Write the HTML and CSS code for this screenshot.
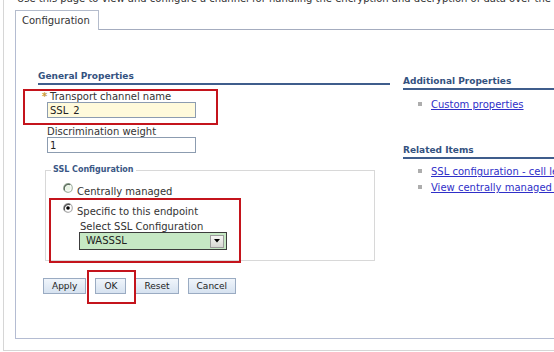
FILE: index.html
```html
<!DOCTYPE html>
<html lang="en">
<head>
<meta charset="utf-8">
<title>SSL inbound channel - Configuration</title>
<link rel="stylesheet" href="styles.css">
</head>
<body>
<div class="page">
  <p class="desc">Use this page to view and configure a channel for handling the encryption and decryption of data over the network.</p>
  <div class="tabs">
    <div class="tab">Configuration</div>
    <div class="tab-fill"></div>
  </div>
  <div class="panel">
    <div class="cols">
      <div class="main">
        <h2 class="sec">General Properties</h2>
        <div class="field">
          <label class="lbl"><span class="req">*</span>Transport channel name</label>
          <input class="txt txt-req" type="text" value="SSL_2">
        </div>
        <div class="field field-2">
          <label class="lbl">Discrimination weight</label>
          <input class="txt" type="text" value="1">
        </div>
        <fieldset class="group">
          <legend class="legend">SSL Configuration</legend>
          <div class="radio-row">
            <svg class="radio" width="10" height="10" viewBox="0 0 10 10"><circle cx="5" cy="5" r="4.3" fill="#fff" stroke="#a8b8a8" stroke-width="1.2"/><path d="M1.6 7.2 A4.3 4.3 0 0 1 7.2 1.6" fill="none" stroke="#5f6f5f" stroke-width="1.3"/><circle cx="5" cy="5" r="2.6" fill="#e8f4e4"/></svg>
            <span class="radio-txt">Centrally managed</span>
          </div>
          <div class="radio-row radio-row-2">
            <svg class="radio" width="10" height="10" viewBox="0 0 10 10"><circle cx="5" cy="5" r="4.3" fill="#fff" stroke="#b0b0b0" stroke-width="1.2"/><path d="M1.6 7.2 A4.3 4.3 0 0 1 7.2 1.6" fill="none" stroke="#555" stroke-width="1.3"/><circle cx="5" cy="5" r="1.8" fill="#000"/></svg>
            <span class="radio-txt">Specific to this endpoint</span>
          </div>
          <div class="sub">
            <div class="sub-lbl">Select SSL Configuration</div>
            <div class="select">
              <span class="select-val">WASSSL</span>
              <span class="select-btn"><svg width="6" height="4" viewBox="0 0 6 4"><path d="M0 0 H6 L3 3.5 Z" fill="#000"/></svg></span>
            </div>
          </div>
        </fieldset>
        <div class="buttons">
          <button class="btn" type="button">Apply</button>
          <button class="btn" type="button">OK</button>
          <button class="btn" type="button">Reset</button>
          <button class="btn" type="button">Cancel</button>
        </div>
      </div>
      <div class="side">
        <h2 class="sec">Additional Properties</h2>
        <ul class="links links-1">
          <li><span class="bullet"></span><a href="#">Custom properties</a></li>
        </ul>
        <h2 class="sec sec-related">Related Items</h2>
        <ul class="links links-2">
          <li><span class="bullet"></span><a href="#">SSL configuration - cell level</a></li>
          <li><span class="bullet"></span><a href="#">View centrally managed certificates</a></li>
        </ul>
      </div>
    </div>
  </div>
  <div class="mark mark-1"></div>
  <div class="mark mark-2"></div>
  <div class="mark mark-3"></div>
</div>
</body>
</html>
```

FILE: styles.css
```css
html, body {
  margin: 0;
  padding: 0;
  overflow: hidden;
  background: #fff;
}
body {
  width: 554px;
  height: 352px;
  font-family: "DejaVu Sans", Verdana, sans-serif;
  font-size: 10px;
  color: #333;
}
.page {
  display: flow-root;
  position: relative;
  width: 660px;
  margin-left: 3px;
  border-left: 1px solid #d6d6d6;
  border-bottom: 1px solid #d6d6d6;
  padding-bottom: 11px;
}
.desc {
  margin: -7px 0 0 13px;
  line-height: 12px;
  white-space: nowrap;
  color: #333;
}
.tabs {
  display: flex;
  margin: 5px 0 0 11px;
}
.tab {
  border: 1px solid #b4bccc;
  border-bottom: none;
  padding: 4px 8px 3px 6px;
  line-height: 12px;
  color: #333;
  background: #fff;
}
.tab-fill {
  flex: 1;
  border-bottom: 1px solid #a4acbf;
}
.panel {
  margin-left: 11px;
  border-left: 1px solid #b4bcd2;
  border-bottom: 1px solid #b4bcd2;
  padding: 41px 0 44px 22px;
}
.cols {
  display: grid;
  grid-template-columns: 352px 1fr;
  column-gap: 13px;
}
.sec {
  margin: 0;
  font-size: 9px;
  line-height: 11px;
  font-weight: bold;
  color: #34527f;
  padding-bottom: 1px;
  border-bottom: 2px solid #3f5d8c;
  white-space: nowrap;
}
.field {
  margin: 6px 0 0 9px;
}
.field-2 {
  margin-top: 8px;
}
.lbl {
  display: block;
  line-height: 11px;
  color: #333;
}
.req {
  display: inline-block;
  width: 8px;
  margin-left: -5px;
  color: #c89a38;
  font-weight: bold;
}
.txt {
  display: block;
  box-sizing: border-box;
  width: 149px;
  height: 16px;
  margin: 0;
  padding: 0 2px;
  border: 1px solid #8c9cb0;
  font-family: "DejaVu Sans", Verdana, sans-serif;
  font-size: 10px;
  line-height: 14px;
  color: #222;
  background: #fff;
  outline: none;
}
.txt-req {
  background: #fffadb;
}
.group {
  box-sizing: border-box;
  width: 330px;
  margin: 12px 0 0 7px;
  padding: 8px 0 10px 5px;
  border: 1px solid #d8d8d8;
  min-width: 0;
}
.legend {
  padding: 0 2px;
  font-size: 8px;
  line-height: 10px;
  font-weight: bold;
  color: #3a5785;
}
.radio-row {
  display: flex;
  align-items: flex-start;
  gap: 4px;
  margin-left: 12px;
}
.radio-row-2 {
  margin-top: 6px;
}
.radio {
  display: block;
  flex: none;
}
.radio-txt {
  margin-top: 3px;
  line-height: 11px;
  color: #333;
}
.sub {
  margin: 4px 0 0 28px;
}
.sub-lbl {
  line-height: 11px;
  padding-left: 1px;
  color: #333;
}
.select {
  box-sizing: border-box;
  display: flex;
  align-items: center;
  justify-content: space-between;
  width: 148px;
  height: 18px;
  padding: 0 2px 0 6px;
  border: 1px solid #3c3c3c;
  background: #c6e8c4;
  color: #222;
}
.select-val {
  line-height: 12px;
}
.select-btn {
  box-sizing: border-box;
  display: flex;
  align-items: center;
  justify-content: center;
  width: 14px;
  height: 13px;
  border: 1px solid #9c9c9c;
  background: linear-gradient(#f6f6f4, #d8d8d4);
}
.buttons {
  display: flex;
  gap: 9px;
  margin: 17px 0 0 5px;
}
.btn {
  height: 16px;
  margin: 0;
  padding: 0 8px;
  border: 1px solid #9aabc2;
  background: linear-gradient(#f0f5fb, #d6e2f0);
  font-family: "DejaVu Sans", Verdana, sans-serif;
  font-size: 9px;
  line-height: 14px;
  color: #222;
}
.side {
  margin-top: 5px;
}
.links {
  list-style: none;
  margin: 0;
  padding: 0 0 0 15px;
}
.links-1 {
  margin-top: 9px;
}
.links-2 {
  margin-top: 7px;
}
.links li {
  display: flex;
  align-items: flex-start;
  line-height: 12px;
  white-space: nowrap;
}
.links li + li {
  margin-top: 4px;
}
.bullet {
  flex: none;
  width: 4px;
  height: 4px;
  margin: 3px 9px 0 0;
  background: #adadad;
}
.links a {
  color: #2f2fc8;
  text-decoration: underline;
}
.sec-related {
  margin-top: 34px;
}
.mark {
  position: absolute;
  box-sizing: border-box;
  border: 2px solid #c4141c;
}
.mark-1 {
  left: 19px;
  top: 89px;
  width: 195px;
  height: 36px;
}
.mark-2 {
  left: 45px;
  top: 198px;
  width: 192px;
  height: 65px;
}
.mark-3 {
  left: 83px;
  top: 270px;
  width: 49px;
  height: 34px;
}
```
